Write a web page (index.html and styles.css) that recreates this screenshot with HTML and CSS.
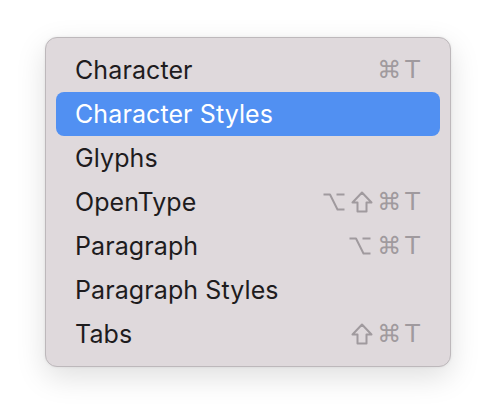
FILE: index.html
```html
<!DOCTYPE html>
<html>
<head>
<meta charset="utf-8">
<link rel="stylesheet" href="styles.css">
</head>
<body>
<div class="menu">
  <div class="item"><span class="label">Character</span><span class="keys"><span>⌘</span><span>T</span></span></div>
  <div class="item active"><span class="label">Character Styles</span></div>
  <div class="item"><span class="label">Glyphs</span></div>
  <div class="item"><span class="label">OpenType</span><span class="keys"><svg class="opt" viewBox="0 0 22 20"><path d="M0.5 2.5 H7 L14.5 17.5 H21.5 M13.5 2.5 H21.5"/></svg><svg class="shift" viewBox="0 0 22 22"><path d="M11 1.5 L20.5 11.5 H15.5 V20.5 H6.5 V11.5 H1.5 Z"/></svg><span>⌘</span><span>T</span></span></div>
  <div class="item"><span class="label">Paragraph</span><span class="keys"><svg class="opt" viewBox="0 0 22 20"><path d="M0.5 2.5 H7 L14.5 17.5 H21.5 M13.5 2.5 H21.5"/></svg><span>⌘</span><span>T</span></span></div>
  <div class="item"><span class="label">Paragraph Styles</span></div>
  <div class="item"><span class="label">Tabs</span><span class="keys"><svg class="shift" viewBox="0 0 22 22"><path d="M11 1.5 L20.5 11.5 H15.5 V20.5 H6.5 V11.5 H1.5 Z"/></svg><span>⌘</span><span>T</span></span></div>
</div>
</body>
</html>
```
FILE: styles.css
```css
html, body {
  margin: 0;
  padding: 0;
  background: #ffffff;
}
body {
  min-height: 420px;
  box-sizing: border-box;
  padding: 37px 0 0 45px;
  font-family: Inter, "Liberation Sans", sans-serif;
}
.menu {
  box-sizing: border-box;
  width: 406px;
  height: 330px;
  padding: 10px;
  background: #dfd9dc;
  border: 1px solid #bdb8bb;
  border-radius: 12px;
  box-shadow: 0 10px 30px rgba(0,0,0,0.13), 0 0 3px rgba(0,0,0,0.07);
  display: flex;
  flex-direction: column;
}
.item {
  height: 44px;
  display: flex;
  align-items: center;
  justify-content: space-between;
  padding: 0 20px 0 19px;
  border-radius: 8px;
  color: #1e1c1e;
  font-size: 25px;
  letter-spacing: 0.1px;
}
.item.active {
  background: #5190f2;
  color: #ffffff;
}
.keys {
  display: flex;
  align-items: center;
  gap: 4px;
  color: #a09a9e;
  font-family: "DejaVu Sans", sans-serif;
  font-size: 24px;
}
.opt {
  width: 22px;
  height: 20px;
  margin-right: 2px;
}
.shift {
  width: 22px;
  height: 22px;
}
.opt path,
.shift path {
  fill: none;
  stroke: #a09a9e;
  stroke-width: 2;
  stroke-linejoin: round;
}
```
